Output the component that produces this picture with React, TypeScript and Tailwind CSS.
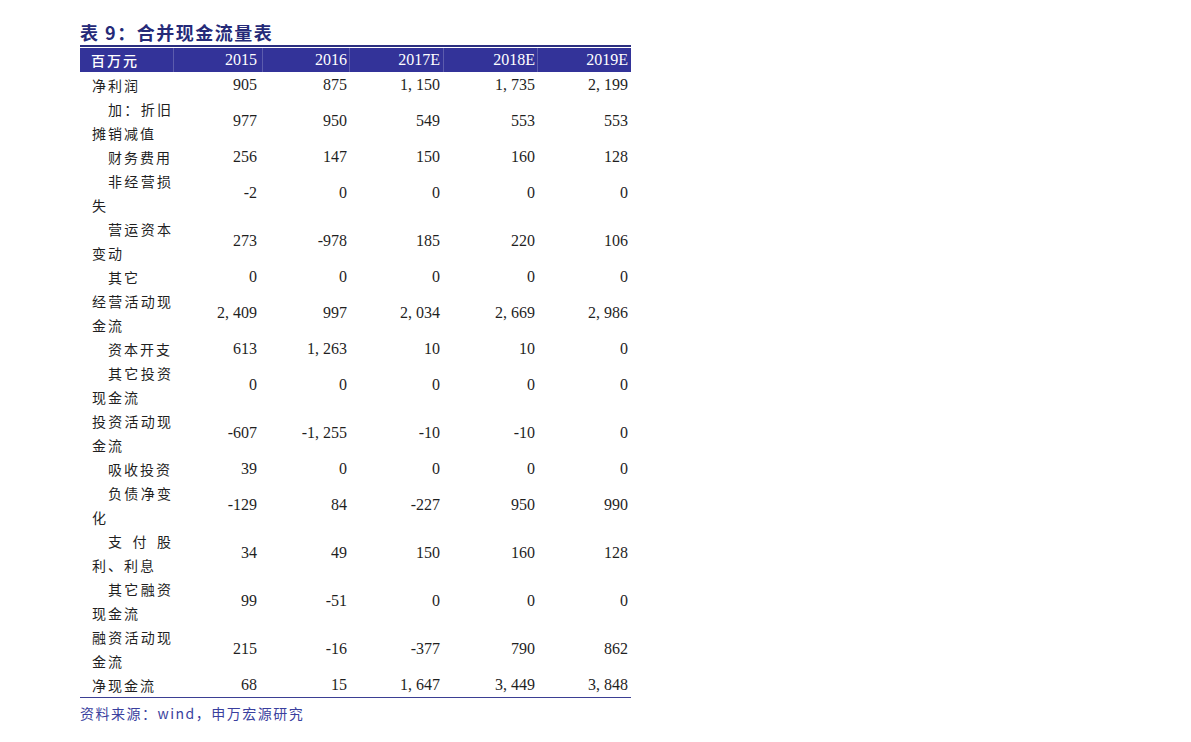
import React from 'react';

type Row = { label: string; indent: boolean; values: string[] };

const rows: Row[] = [
  { label: '净利润', indent: false, values: ['905', '875', '1,150', '1,735', '2,199'] },
  { label: '加：折旧摊销减值', indent: true, values: ['977', '950', '549', '553', '553'] },
  { label: '财务费用', indent: true, values: ['256', '147', '150', '160', '128'] },
  { label: '非经营损失', indent: true, values: ['-2', '0', '0', '0', '0'] },
  { label: '营运资本变动', indent: true, values: ['273', '-978', '185', '220', '106'] },
  { label: '其它', indent: true, values: ['0', '0', '0', '0', '0'] },
  { label: '经营活动现金流', indent: false, values: ['2,409', '997', '2,034', '2,669', '2,986'] },
  { label: '资本开支', indent: true, values: ['613', '1,263', '10', '10', '0'] },
  { label: '其它投资现金流', indent: true, values: ['0', '0', '0', '0', '0'] },
  { label: '投资活动现金流', indent: false, values: ['-607', '-1,255', '-10', '-10', '0'] },
  { label: '吸收投资', indent: true, values: ['39', '0', '0', '0', '0'] },
  { label: '负债净变化', indent: true, values: ['-129', '84', '-227', '950', '990'] },
  { label: '支付股利、利息', indent: true, values: ['34', '49', '150', '160', '128'] },
  { label: '其它融资现金流', indent: true, values: ['99', '-51', '0', '0', '0'] },
  { label: '融资活动现金流', indent: false, values: ['215', '-16', '-377', '790', '862'] },
  { label: '净现金流', indent: false, values: ['68', '15', '1,647', '3,449', '3,848'] },
];

const years = ['2015', '2016', '2017E', '2018E', '2019E'];
// column widths + right padding measured off the header separators
const colW = [
  'w-[89px] pr-[5px]',
  'w-[87px] pr-[2px]',
  'w-[94px] pr-[3px]',
  'w-[94px] pr-[2px]',
  'w-[94px] pr-[3px]',
];

const cjk = { fontFamily: '"Noto Sans CJK SC", "Noto Sans", sans-serif' };
const serif = { fontFamily: '"Liberation Serif", "Times New Roman", serif' };

function Num({ v }: { v: string }) {
  const parts = v.split(',');
  return (
    <>
      {parts.map((p, i) => (
        <React.Fragment key={i}>
          {i > 0 && <span className="mr-[4px]">,</span>}
          {p}
        </React.Fragment>
      ))}
    </>
  );
}

export default function App() {
  return (
    <div className="min-h-screen bg-white">
      <div className="pl-[80px] pt-[20px] w-[631px]">
        <h1
          className="h-[25px] text-[18px] leading-[24px] font-bold text-[#252a78] tracking-[1.5px]"
          style={cjk}
        >
          表 9：合并现金流量表
        </h1>

        <div className="border-t-[2px] border-[#2b2f80]">
          {/* header */}
          <div className="mt-[1px] flex h-[24px] bg-[#333399] text-white items-center">
            <div className="w-[93px] pl-[11px] text-[14px] tracking-[2px] font-medium" style={cjk}>
              百万元
            </div>
            {years.map((y, i) => (
              <div
                key={y}
                className={`${colW[i]} h-full flex items-center justify-end text-[16px] border-l border-[#5c5cad]`}
                style={serif}
              >
                {y}
              </div>
            ))}
          </div>

          {/* body */}
          <div className="mt-[1px] text-[#1f1f1f]">
            {rows.map((r) => (
              <div key={r.label} className="flex items-center">
                <div className="w-[93px] pl-[12px]">
                  <div
                    className={`w-[81px] text-[14px] leading-[24px] tracking-[2px] text-justify ${r.indent ? 'indent-[16px]' : ''}`}
                    style={cjk}
                  >
                    {r.label}
                  </div>
                </div>
                {r.values.map((v, i) => (
                  <div
                    key={i}
                    className={`${colW[i]} h-[24px] text-right text-[16px] leading-[24px]`}
                    style={serif}
                  >
                    <Num v={v} />
                  </div>
                ))}
              </div>
            ))}
          </div>
        </div>

        <div className="border-t border-[#3b3f93] pt-[4px]">
          <p className="text-[14px] leading-[22px] text-[#3a3f9e] tracking-[1.5px]" style={cjk}>
            资料来源：wind，申万宏源研究
          </p>
        </div>
      </div>
    </div>
  );
}
